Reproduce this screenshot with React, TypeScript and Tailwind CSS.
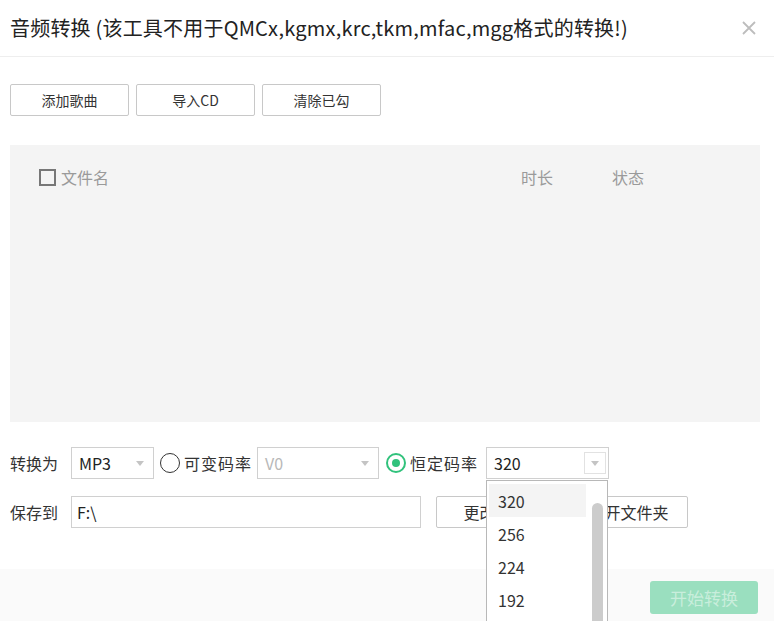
import React from "react";

const font = { fontFamily: '"Microsoft YaHei", "Noto Sans CJK SC", "Noto Sans", sans-serif' };

function Caret() {
  return (
    <svg width="8" height="5" viewBox="0 0 8 5">
      <path d="M0 0 L8 0 L4 5 Z" fill="#c4c4c4" />
    </svg>
  );
}

function Select({ value, width, disabled, boxed }: { value: string; width: string; disabled?: boolean; boxed?: boolean }) {
  return (
    <div className={`flex h-[32px] ${width} shrink-0 items-center justify-between border border-[#d0d0d0] bg-white pl-[7px] pr-[2px]`}>
      <span className={`text-[16px] ${disabled ? "text-[#b8b8b8]" : "text-[#222]"}`}>{value}</span>
      {boxed ? (
        <span className="flex h-[22px] w-[22px] items-center justify-center border border-[#e2e2e2]">
          <Caret />
        </span>
      ) : (
        <span className="flex w-[22px] items-center justify-center">
          <Caret />
        </span>
      )}
    </div>
  );
}

function Radio({ checked }: { checked?: boolean }) {
  return checked ? (
    <span className="flex h-[20px] w-[20px] shrink-0 items-center justify-center rounded-full border-2 border-[#31c27c]">
      <span className="block h-[8px] w-[8px] rounded-full bg-[#31c27c]" />
    </span>
  ) : (
    <span className="block h-[20px] w-[20px] shrink-0 rounded-full border-[1.5px] border-[#333]" />
  );
}

function Btn({ children, className = "" }: { children: React.ReactNode; className?: string }) {
  return (
    <button className={`flex h-[32px] w-[119px] items-center justify-center rounded-[2px] border border-[#c8c8c8] bg-white text-[14px] text-[#333] ${className}`}>
      {children}
    </button>
  );
}

export default function App() {
  const rates = ["320", "256", "224", "192"];
  return (
    <div className="relative h-[621px] w-[774px] overflow-hidden bg-white text-[#333]" style={font}>
      <div className="flex h-[57px] items-center justify-between border-b border-[#eeeeee] pl-[10px] pr-[18px]">
        <h1 className="whitespace-nowrap text-[20px] tracking-[0.2px] text-[#222]">音频转换 (该工具不用于QMCx,kgmx,krc,tkm,mfac,mgg格式的转换!)</h1>
        <svg width="14" height="14" viewBox="0 0 14 14">
          <path d="M1 1 L13 13 M13 1 L1 13" stroke="#bdbdbd" strokeWidth="1.8" />
        </svg>
      </div>

      <div className="mt-[27px] flex gap-[7px] pl-[10px]">
        <Btn>添加歌曲</Btn>
        <Btn>导入CD</Btn>
        <Btn>清除已勾</Btn>
      </div>

      <div className="ml-[10px] mt-[29px] h-[277px] w-[750px] bg-[#f4f4f4] pt-[20px]">
        <div className="flex items-center text-[16px] text-[#9a9a9a]">
          <span className="ml-[29px] block h-[17px] w-[17px] border-2 border-[#777]" />
          <span className="ml-[5px]">文件名</span>
          <span className="ml-[412px]">时长</span>
          <span className="ml-[59px]">状态</span>
        </div>
      </div>

      <div className="mt-[25px] flex items-center pl-[10px] text-[16px]">
        <span className="w-[61px] shrink-0">转换为</span>
        <Select value="MP3" width="w-[83px]" />
        <span className="ml-[6px]"><Radio /></span>
        <span className="ml-[4px] tracking-[1px]">可变码率</span>
        <span className="ml-[5px]"><Select value="V0" width="w-[122px]" disabled /></span>
        <span className="ml-[7px]"><Radio checked /></span>
        <span className="ml-[4px] tracking-[1px]">恒定码率</span>
        <span className="ml-[8px]"><Select value="320" width="w-[123px]" boxed /></span>
      </div>

      <div className="mt-[17px] flex items-center pl-[10px] text-[16px]">
        <span className="w-[61px] shrink-0">保存到</span>
        <div className="flex h-[32px] w-[350px] items-center border border-[#d0d0d0] pl-[5px] text-[#222]">F:\</div>
        <div className="ml-[15px] flex gap-[14px]">
          <Btn className="text-[16px]">更改目录</Btn>
          <Btn className="text-[16px]">打开文件夹</Btn>
        </div>
      </div>

      <div className="absolute bottom-0 left-0 flex h-[52px] w-full items-start justify-end bg-[#fafafa] pr-[16px] pt-[12px]">
        <button className="flex h-[33px] w-[108px] items-center justify-center rounded-[3px] bg-[#9adfbf] text-[17px] text-[#c9eedc]">
          开始转换
        </button>
      </div>

      <div className="absolute left-[486px] top-[480px] h-[160px] w-[122px] border border-[#b8b8b8] bg-white">
        <div className="flex pt-[3px]">
          <div className="w-[99px] pl-[2px]">
            {rates.map((r, i) => (
              <div key={r} className={`flex h-[33px] items-center pl-[9px] text-[16px] text-[#333] ${i === 0 ? "bg-[#f4f4f4]" : ""}`}>
                {r}
              </div>
            ))}
          </div>
          <div className="ml-[6px] mt-[19px] h-[140px] w-[11px] rounded-full bg-[#cccccc]" />
        </div>
      </div>
    </div>
  );
}
